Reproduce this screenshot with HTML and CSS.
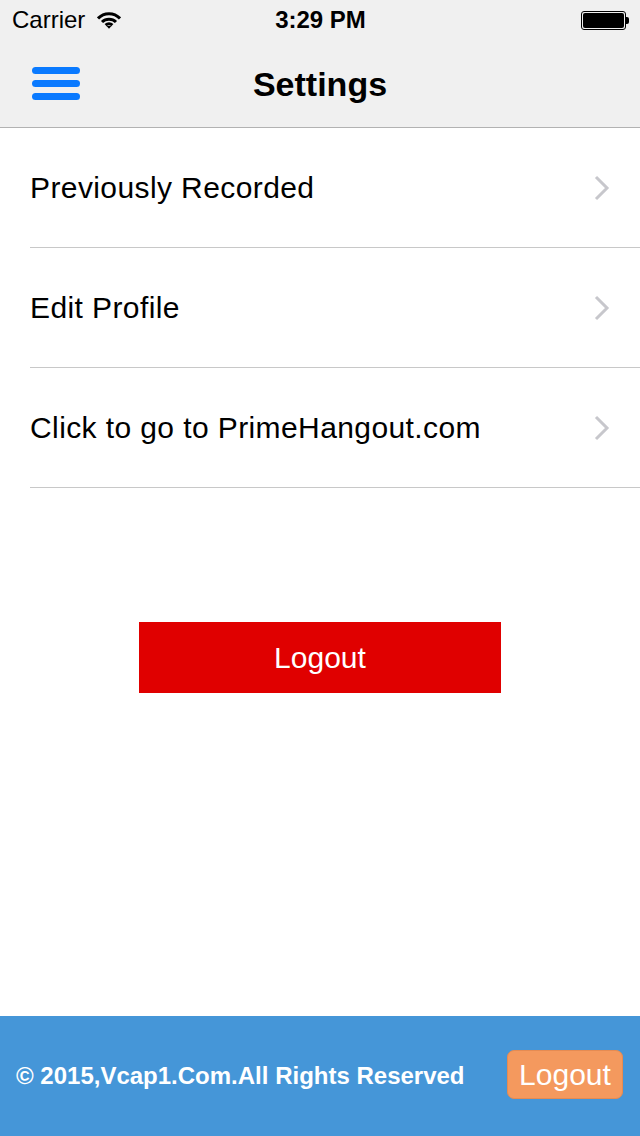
FILE: index.html
```html
<!DOCTYPE html>
<html lang="en">
<head>
  <meta charset="UTF-8">
  <meta name="viewport" content="width=device-width, initial-scale=1.0">
  <title>Settings</title>
  <link rel="stylesheet" href="styles.css">
</head>
<body>
  <div class="app">
    <header class="top">
      <div class="status">
        <div class="status__left">
          <span>Carrier</span>
          <svg class="status__wifi" width="24" height="17" viewBox="0 0 24 17">
            <path d="M1 6.5 A15 15 0 0 1 23 6.5" fill="none" stroke="#000" stroke-width="3"/>
            <path d="M5 10 A10 10 0 0 1 19 10" fill="none" stroke="#000" stroke-width="3"/>
            <path d="M8.6 13.2 A5 5 0 0 1 15.4 13.2" fill="none" stroke="#000" stroke-width="3"/>
            <polygon points="9.5,14 14.5,14 12,16.8" fill="#000"/>
          </svg>
        </div>
        <div class="status__time">3:29 PM</div>
        <div class="status__right">
          <span class="battery"><span class="battery__fill"></span></span>
          <span class="battery__nub"></span>
        </div>
      </div>
      <nav class="nav">
        <svg class="nav__menu" width="48" height="33" viewBox="0 0 48 33">
          <rect x="0" y="0" width="48" height="7" rx="3.5" fill="#0a7aff"/>
          <rect x="0" y="13" width="48" height="7" rx="3.5" fill="#0a7aff"/>
          <rect x="0" y="26" width="48" height="7" rx="3.5" fill="#0a7aff"/>
        </svg>
        <h1 class="nav__title">Settings</h1>
        <span></span>
      </nav>
    </header>

    <main class="settings">
      <ul class="list">
        <li class="list__item">
          <span>Previously Recorded</span>
          <svg class="list__arrow" width="16" height="26" viewBox="0 0 16 26"><polyline points="2,2 13,13 2,24" fill="none" stroke="#c7c7cc" stroke-width="3"/></svg>
        </li>
        <li class="list__item">
          <span>Edit Profile</span>
          <svg class="list__arrow" width="16" height="26" viewBox="0 0 16 26"><polyline points="2,2 13,13 2,24" fill="none" stroke="#c7c7cc" stroke-width="3"/></svg>
        </li>
        <li class="list__item">
          <span>Click to go to PrimeHangout.com</span>
          <svg class="list__arrow" width="16" height="26" viewBox="0 0 16 26"><polyline points="2,2 13,13 2,24" fill="none" stroke="#c7c7cc" stroke-width="3"/></svg>
        </li>
      </ul>
      <button class="logout" type="button">Logout</button>
    </main>

    <footer class="footer">
      <span class="footer__text">© 2015,Vcap1.Com.All Rights Reserved</span>
      <button class="footer__btn" type="button">Logout</button>
    </footer>
  </div>
</body>
</html>
```

FILE: styles.css
```css
*,
*::before,
*::after {
  box-sizing: border-box;
}
body{
  margin: 0;
  padding: 0;
  font-family: 'Liberation Sans', Arial, sans-serif;
  color: #000;
  background: #fff;
}
h1, ul{
  margin: 0;
  padding: 0;
}
button{
  font-family: inherit;
  cursor: pointer;
}
.app{
  display: flex;
  flex-direction: column;
  height: 1136px;
}
.top{
  background-color: #f0f0f0;
  border-bottom: 1px solid #b2b2b2;
}
.status{
  height: 40px;
  display: grid;
  grid-template-columns: 1fr auto 1fr;
  align-items: center;
  padding: 0 11px 0 12px;
  font-size: 24px;
}
.status__left{
  display: flex;
  align-items: center;
  gap: 12px;
}
.status__wifi{
  margin-top: 1px;
}
.status__time{
  font-weight: bold;
}
.status__right{
  display: flex;
  justify-content: flex-end;
  align-items: center;
}
.battery{
  display: block;
  width: 45px;
  height: 19px;
  border: 1px solid #000;
  border-radius: 3px;
  padding: 1px;
}
.battery__fill{
  display: block;
  height: 100%;
  background: #000;
  border-radius: 2px;
}
.battery__nub{
  display: block;
  width: 3px;
  height: 7px;
  background: #000;
  border-radius: 0 2px 2px 0;
}
.nav{
  height: 87px;
  display: grid;
  grid-template-columns: 1fr auto 1fr;
  align-items: center;
  padding: 0 32px;
}
.nav__menu{
  display: block;
  margin-top: -1px;
}
.nav__title{
  font-size: 34px;
  font-weight: bold;
  margin-top: 1px;
}
.settings{
  flex: 1;
  display: flex;
  flex-direction: column;
}
.list{
  list-style: none;
}
.list__item{
  height: 120px;
  margin-left: 30px;
  padding-right: 30px;
  border-bottom: 1px solid #c8c8c8;
  display: flex;
  align-items: center;
  justify-content: space-between;
  font-size: 30px;
  letter-spacing: 0.4px;
}
.list__arrow{
  display: block;
}
.logout{
  align-self: center;
  margin-top: 134px;
  width: 362px;
  height: 71px;
  border: none;
  background-color: #e00000;
  color: #fff;
  font-size: 30px;
}
.footer{
  height: 120px;
  background-color: #4596d8;
  display: flex;
  align-items: center;
  justify-content: space-between;
  padding: 0 17px 0 16px;
}
.footer__text{
  color: #fff;
  font-size: 24px;
  font-weight: bold;
}
.footer__btn{
  width: 116px;
  height: 49px;
  margin-top: -3px;
  background-color: #f4995e;
  border: 1px solid #e58b52;
  border-radius: 7px;
  color: #fff;
  font-size: 30px;
  padding: 0;
}
```
